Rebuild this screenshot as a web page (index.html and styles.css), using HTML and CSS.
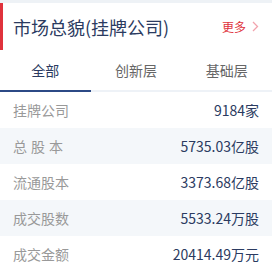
FILE: index.html
```html
<!DOCTYPE html>
<html lang="zh-CN">
<head>
    <meta charset="UTF-8">
    <title>市场总貌</title>
    <link rel="stylesheet" href="styles.css">
</head>
<body>
    <div class="panel">
        <div class="panel-head">
            <h2 class="panel-title">市场总貌(挂牌公司)</h2>
            <a class="more" href="#">更多
                <svg width="7" height="11" viewBox="0 0 7 11"><path d="M1 1l4.5 4.5L1 10" fill="none" stroke="#f2a3ad" stroke-width="1.3"/></svg>
            </a>
        </div>
        <div class="tabs">
            <div class="tab active">全部</div>
            <div class="tab">创新层</div>
            <div class="tab">基础层</div>
        </div>
        <ul class="stats">
            <li><span class="label">挂牌公司</span><span class="value">9184家</span></li>
            <li><span class="label spaced">总股本</span><span class="value">5735.03亿股</span></li>
            <li><span class="label">流通股本</span><span class="value">3373.68亿股</span></li>
            <li><span class="label">成交股数</span><span class="value">5533.24万股</span></li>
            <li><span class="label">成交金额</span><span class="value">20414.49万元</span></li>
        </ul>
    </div>
</body>
</html>
```

FILE: styles.css
```css
body {
    margin: 0;
    background-color: #fff;
    font-family: "Noto Sans CJK SC", "Noto Sans", sans-serif;
}
.panel {
    width: 272px;
    border-top: 3px solid #eef2f6;
}
.panel-head {
    display: flex;
    align-items: center;
    justify-content: space-between;
    height: 47px;
    padding: 0 13px 0 10px;
    border-left: 3px solid #e0323c;
    box-sizing: border-box;
}
.panel-title {
    margin: 0;
    font-size: 18px;
    font-weight: normal;
    color: #2b3b61;
}
.more {
    display: flex;
    align-items: center;
    gap: 6px;
    font-size: 12px;
    color: #e0323c;
    text-decoration: none;
}
.tabs {
    display: flex;
    height: 40px;
    border-bottom: 2px solid #eef2f7;
}
.tab {
    flex: 1;
    display: flex;
    align-items: center;
    justify-content: center;
    font-size: 14px;
    color: #666;
    margin-bottom: -2px;
    border-bottom: 2px solid transparent;
}
.tab.active {
    color: #2b3b61;
    border-bottom-color: #2c4a86;
}
.stats {
    list-style: none;
    margin: 0;
    padding: 0;
}
.stats li {
    display: flex;
    align-items: center;
    justify-content: space-between;
    height: 36px;
    padding: 0 13px;
}
.stats li:nth-child(even) {
    background-color: #f4f7fa;
}
.label {
    font-size: 14px;
    color: #999;
}
.label.spaced {
    letter-spacing: 4px;
}
.value {
    font-size: 14px;
    color: #2b3b61;
}
```
